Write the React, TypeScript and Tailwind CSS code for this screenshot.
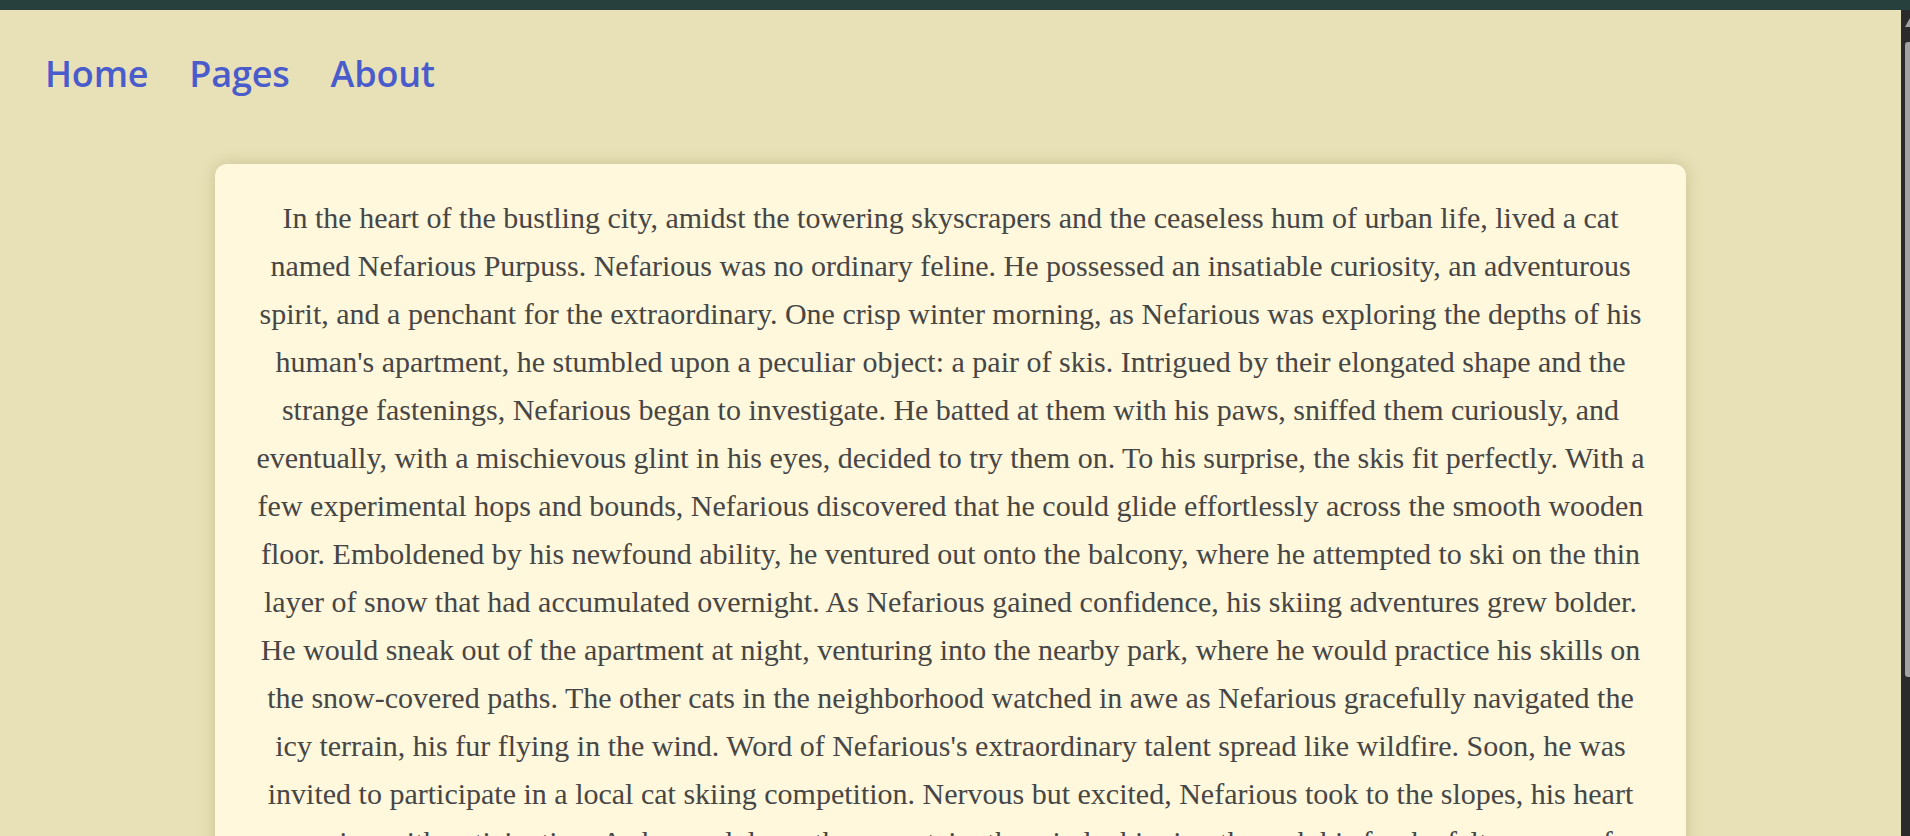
import React from "react";

const story =
  "In the heart of the bustling city, amidst the towering skyscrapers and the ceaseless hum of urban life, lived a cat named Nefarious Purpuss. Nefarious was no ordinary feline. He possessed an insatiable curiosity, an adventurous spirit, and a penchant for the extraordinary. One crisp winter morning, as Nefarious was exploring the depths of his human's apartment, he stumbled upon a peculiar object: a pair of skis. Intrigued by their elongated shape and the strange fastenings, Nefarious began to investigate. He batted at them with his paws, sniffed them curiously, and eventually, with a mischievous glint in his eyes, decided to try them on. To his surprise, the skis fit perfectly. With a few experimental hops and bounds, Nefarious discovered that he could glide effortlessly across the smooth wooden floor. Emboldened by his newfound ability, he ventured out onto the balcony, where he attempted to ski on the thin layer of snow that had accumulated overnight. As Nefarious gained confidence, his skiing adventures grew bolder. He would sneak out of the apartment at night, venturing into the nearby park, where he would practice his skills on the snow-covered paths. The other cats in the neighborhood watched in awe as Nefarious gracefully navigated the icy terrain, his fur flying in the wind. Word of Nefarious's extraordinary talent spread like wildfire. Soon, he was invited to participate in a local cat skiing competition. Nervous but excited, Nefarious took to the slopes, his heart surging with anticipation. As he sped down the mountain, the wind whipping through his fur, he felt a sense of freedom unlike anything he had ever known. He carved graceful turns through the powder, leapt over moguls with ease, and crossed the finish line to the thunderous applause of the crowd.";

export default function App() {
  return (
    <div className="w-[1910px] h-[836px] overflow-hidden flex flex-col bg-[#e8e1b7]">
      <div className="h-[10px] shrink-0 bg-[#273f3d]" />
      <div className="flex flex-1 min-h-0">
        <div className="flex-1 min-w-0 overflow-hidden">
          <nav
            className="flex items-start gap-[41px] pl-[45px] pt-[36px] h-[118px]"
            style={{ fontFamily: "'Open Sans', 'Noto Sans', sans-serif" }}
          >
            <a className="text-[36px] font-semibold text-[#4a5ccc] leading-[56px] tracking-[-0.2px]">Home</a>
            <a className="text-[36px] font-semibold text-[#4a5ccc] leading-[56px] tracking-[-0.2px]">Pages</a>
            <a className="text-[36px] font-semibold text-[#4a5ccc] leading-[56px] tracking-[-0.2px]">About</a>
          </nav>
          <div className="mt-[36px] mx-[215px] rounded-[12px] bg-[#fff8dc] shadow-[0_0_16px_rgba(120,100,40,0.25)] px-[40px] pt-[30px] pb-[40px]">
            <p
              className="text-center text-[30px] leading-[48px] text-[#464646]"
              style={{ fontFamily: "'Liberation Serif', 'Times New Roman', serif" }}
            >
              {story}
            </p>
          </div>
        </div>
        <div className="w-[9px] shrink-0 bg-[#2b2b2b] relative">
          <div className="absolute left-[4px] top-[8px] w-0 h-0 border-l-[5px] border-b-[9px] border-l-transparent border-b-[#a3a3a3]" />
          <div className="absolute left-[4px] top-[32px] w-[5px] h-[635px] bg-[#a3a3a3] rounded-tl-[3px] rounded-bl-[3px]" />
        </div>
      </div>
    </div>
  );
}
